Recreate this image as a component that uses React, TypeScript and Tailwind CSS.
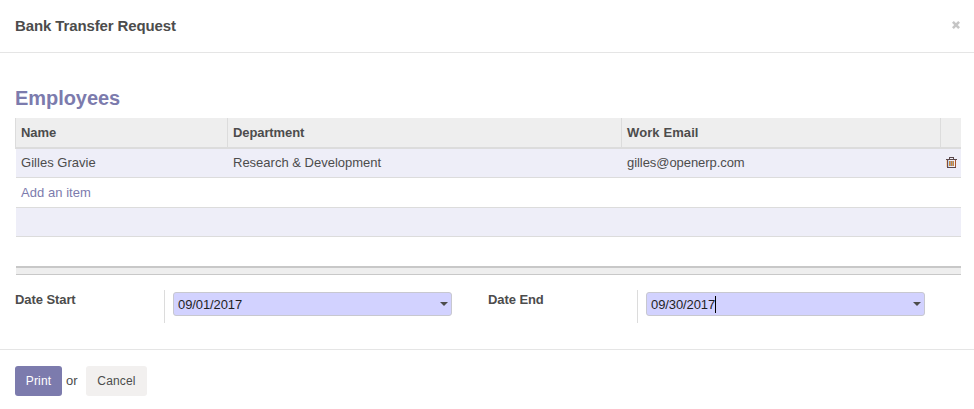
import React from "react";

const columns = "grid grid-cols-[212px_394px_319px_21px]";

function TrashIcon() {
  return (
    <svg width="11" height="11" viewBox="0 0 11 11" fill="none" shapeRendering="crispEdges">
      <path d="M0 3h1v7H0z" fill="#f3d9b8" />
      <path d="M1 3h1v7H1z" fill="#7a4a4a" />
      <path d="M9 3h1v7H9z" fill="#a8552f" />
      <path d="M2 3h1v7H2z" fill="#b9d3ef" />
      <path d="M3 4h1v5H3zM5 4h1v5H5zM7 4h1v5H7z" fill="#c98a3c" />
      <path d="M4 4h1v5H4zM6 4h1v5H6z" fill="#a79a9c" />
      <path d="M3 0.5h5M0 2.5h11M1 10.5h9M3.5 0v2M7.5 0v2" stroke="#5a484c" />
    </svg>
  );
}

function CloseIcon() {
  return (
    <svg width="8" height="8" viewBox="0 0 8 8" stroke="#c6c6c6" strokeWidth="2.6">
      <path d="M0.9 0.9l6.2 6.2M7.1 0.9l-6.2 6.2" />
    </svg>
  );
}

function DateField({ label, value, focused }: { label: string; value: string; focused?: boolean }) {
  return (
    <div className="flex w-[473px]">
      <div className="h-[33px] w-[150px] border-r border-[#dcdcdc] text-[13px] leading-[20px] font-bold">{label}</div>
      <div className="mt-[2px] ml-2 flex h-6 w-[279px] items-center justify-between rounded-[3px] border border-[#c8c8d0] bg-[#d2d2ff] pr-[3px] pl-1 text-[13px] text-[#1f1f1f]">
        <span className="flex items-center">
          <span className="pt-[2px] tracking-[-0.1px]">{value}</span>
          {focused && <span className="h-[17px] w-px bg-black" />}
        </span>
        <svg width="8" height="4" viewBox="0 0 8 4" fill="#4c4c4c">
          <path d="M0 0h8L4 4z" />
        </svg>
      </div>
    </div>
  );
}

export default function App() {
  return (
    <div className="h-[409px] w-[974px] overflow-hidden bg-white font-['Liberation_Sans',Arial,sans-serif] text-[13px] text-[#4c4c4c]">
      <header className="flex h-[53px] items-center justify-between border-b border-[#e5e5e5] pr-[14px] pl-[15px]">
        <h4 className="text-[15px] leading-5 font-bold tracking-[-0.12px]">Bank Transfer Request</h4>
        <button aria-label="Close" className="pb-[2px]"><CloseIcon /></button>
      </header>

      <main className="h-[296px] pt-[33px] pr-[13px] pl-[15px]">
        <h2 className="h-8 text-[20px] leading-6 font-bold tracking-[-0.05px] text-[#7c7bad]">Employees</h2>
        <section>
          <div className={`${columns} h-[31px] border-b-2 border-[#dcdcdc] bg-[#eeeeee] leading-[29px] font-bold`}>
            <div className="border-l border-[#dcdcdc] pl-[5px] tracking-[-0.1px]">Name</div>
            <div className="border-l border-[#dcdcdc] pl-[5px] tracking-[-0.1px]">Department</div>
            <div className="border-l border-[#dcdcdc] pl-[5px] tracking-[0.1px]">Work Email</div>
            <div className="border-l border-[#dcdcdc]" />
          </div>
          <div className="ml-px">
            <div className="grid h-[29px] grid-cols-[212px_394px_319px_20px] border-b border-[#dcdcdc] bg-[#eeeef8] leading-[28px]">
              <div className="pl-[5px] tracking-[0.03px]">Gilles Gravie</div>
              <div className="pl-[5px]">Research &amp; Development</div>
              <div className="pl-[5px] tracking-[-0.06px]">gilles@openerp.com</div>
              <div className="flex pt-[8px] pl-[5px]"><TrashIcon /></div>
            </div>
            <div className="h-[30px] border-b border-[#dcdcdc] pl-[5px] leading-[29px] tracking-[0.05px] text-[#7c7bad]">Add an item</div>
            <div className="h-[29px] border-b border-[#dcdcdc] bg-[#eeeef8]" />
            <div className="h-[29px]" />
            <div className="h-[9px] border-t-2 border-b border-[#c8c8c8] bg-[#eeeeee]" />
          </div>
        </section>
        <section className="mt-[15px] flex tracking-[-0.08px]">
          <DateField label="Date Start" value="09/01/2017" />
          <DateField label="Date End" value="09/30/2017" focused />
        </section>
      </main>

      <footer className="flex h-[60px] border-t border-[#e5e5e5] pt-4 pl-[15px] text-[12px] leading-[30px]">
        <button className="h-[30px] w-[47px] rounded-[3px] bg-[#7c7bad] tracking-[0.15px] text-white">Print</button>
        <span className="w-6 pl-[4px] text-[13px]">or</span>
        <button className="h-[30px] w-[61px] rounded-[3px] bg-[#f2f0ef] tracking-[0.15px]">Cancel</button>
      </footer>
    </div>
  );
}
